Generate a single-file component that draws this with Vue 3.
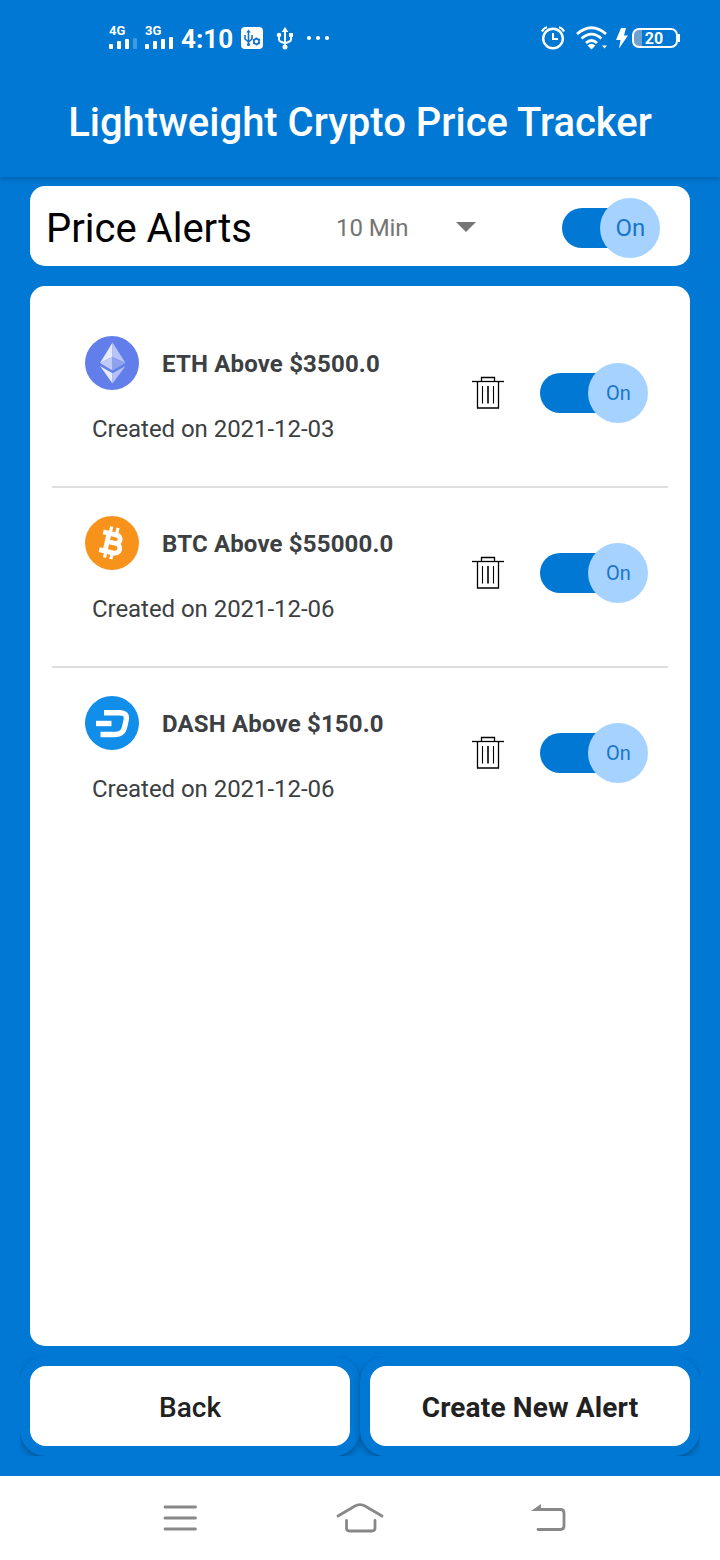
<template>
  <div class="screen">
    <header class="top">
      <div class="status-bar">
        <div class="signal">
          <span>4G</span>
          <svg width="28" height="12" viewBox="0 0 28 12">
            <g fill="#fff">
              <rect x="0" y="6" width="4" height="5" rx="1" />
              <rect x="8" y="3" width="4" height="8" rx="1" />
              <rect x="16" y="1" width="4" height="10" rx="1" />
            </g>
            <rect x="24" y="0" width="4" height="11" rx="1" fill="#3f9ae4" />
          </svg>
        </div>
        <div class="signal">
          <span>3G</span>
          <svg width="28" height="12" viewBox="0 0 28 12" fill="#fff">
            <rect x="0" y="6" width="4" height="5" rx="1" />
            <rect x="8" y="3" width="4" height="8" rx="1" />
            <rect x="16" y="1" width="4" height="10" rx="1" />
            <rect x="24" y="-1" width="4" height="12" rx="1" />
          </svg>
        </div>
        <span class="clock">4:10</span>
        <svg class="usb-debug" width="22" height="22" viewBox="0 0 22 22">
          <rect width="22" height="22" rx="4" fill="#fff" />
          <g fill="none" stroke="#1673c4" stroke-width="1.6">
            <path d="M7.500 4v14M4 8v4l3.500 3 3.500-3V8" />
            <circle cx="15.500" cy="14.500" r="2.600" />
            <path d="M15.500 10.500v1.500M15.500 17v1.500M12 12.500l1.300.8M17.700 15.700l1.300.8M12 16.500l1.300-.8M17.700 13.300l1.300-.8" />
          </g>
          <path d="M5.300 5.500 7.500 2.500l2.200 3z" fill="#1673c4" />
          <circle cx="7.500" cy="17.500" r="1.600" fill="#1673c4" />
        </svg>
        <svg class="usb" width="18" height="23" viewBox="0 0 18 23">
          <path d="M9 3v16M3 8v4.500q0 1.500 1.500 2L9 16.500l4.500-2q1.500-.5 1.500-2V8" fill="none" stroke="#fff" stroke-width="2" />
          <path d="M5.700 5 9 0l3.300 5z" fill="#fff" />
          <circle cx="3" cy="8" r="2.300" fill="#fff" />
          <rect x="13" y="6" width="4" height="4" fill="#fff" />
          <circle cx="9" cy="20" r="2.500" fill="#fff" />
        </svg>
        <svg class="dots" width="24" height="6" viewBox="0 0 24 6" fill="#fff">
          <circle cx="3" cy="3" r="2.100" />
          <circle cx="12" cy="3" r="2.100" />
          <circle cx="21" cy="3" r="2.100" />
        </svg>

        <div class="status-right">
          <svg width="24" height="24" viewBox="0 0 24 24" fill="none" stroke="#fff">
            <circle cx="12" cy="12.500" r="9.800" stroke-width="2.400" />
            <path d="M12 7v6h5" stroke-width="2" />
            <path d="M1 5.500Q2.500 2 6 1.200M23 5.500Q21.500 2 18 1.200" stroke-width="2.200" />
          </svg>
          <svg class="wifi" width="32" height="24" viewBox="0 0 32 24">
            <g fill="none" stroke="#fff" stroke-width="2.800">
              <path d="M1 8Q15.500-4.500 30 8" />
              <path d="M5.500 12.500Q15.500 3.800 25.500 12.500" />
              <path d="M10 17Q15.500 12 21 17" />
            </g>
            <path d="M11.500 19.500Q15.500 16 19.500 19.500L15.500 23.500z" fill="#fff" />
            <path d="M26 19.500h5l-2.500 3z" fill="#fff" />
          </svg>
          <svg class="bolt" width="12" height="21" viewBox="0 0 12 21">
            <path d="M5 0h5L8 7.500h4L3 20.500l1.500-8.500H0z" fill="#fff" />
          </svg>
          <div class="battery">
            <span>20</span>
          </div>
        </div>
      </div>
      <h1>Lightweight Crypto Price Tracker</h1>
    </header>

    <main>
      <section class="card settings">
        <h2>Price Alerts</h2>
        <div class="interval">
          <span>10 Min</span>
          <svg width="20" height="10" viewBox="0 0 20 10">
            <path d="M0 0h20L10 10z" fill="#757575" />
          </svg>
        </div>
        <button class="switch large" :class="{ off: !enabled }" @click="enabled = !enabled">
          <span>{{ enabled ? 'On' : 'Off' }}</span>
        </button>
      </section>

      <section class="card list">
        <div v-for="alert in alerts" :key="alert.coin" class="alert">
          <div class="info">
            <div class="coin">
              <svg v-if="alert.coin === 'ETH'" width="54" height="54" viewBox="0 0 54 54">
                <circle cx="27" cy="27" r="27" fill="#627eea" />
                <path d="M27.500 6.500V21L15 27z" fill="#e6eafc" />
                <path d="M27.500 6.500V21L40.500 27z" fill="#b9c5f6" />
                <path d="M27.500 21 15 27l12.500 7.500z" fill="#c0cbf7" />
                <path d="M27.500 21 40.500 27l-13 7.500z" fill="#8fa2ef" />
                <path d="M15 30l12.500 7.300V47.500z" fill="#e6eafc" />
                <path d="M40.500 30l-13 7.300V47.500z" fill="#b5c1f5" />
              </svg>
              <svg v-else-if="alert.coin === 'BTC'" width="54" height="54" viewBox="0 0 54 54">
                <circle cx="27" cy="27" r="27" fill="#f7931a" />
                <g transform="rotate(13 27 27)" fill="none" stroke="#fff">
                  <path d="M16 18.200h14a4.200 4.200 0 0 1 0 8.400H22M30 26.600h1a4.900 4.900 0 0 1 0 9.800H16M22 18v18" stroke-width="4.800" />
                  <path d="M23 11v6M29.500 11v6M23 37v6M29.500 37v6" stroke-width="3.200" />
                </g>
              </svg>
              <svg v-else width="54" height="54" viewBox="0 0 54 54">
                <circle cx="27" cy="27" r="27" fill="#118dea" />
                <g fill="none" stroke="#fff" stroke-width="5.400">
                  <path d="M19 16.700h15.500q8 0 6.700 7l-1.500 7q-1.700 7.800-9.700 7.800H15.500" />
                  <path d="M11 27.500h15.500" />
                </g>
              </svg>
              <strong>{{ alert.coin }} Above ${{ alert.price }}</strong>
            </div>
            <p>Created on {{ alert.created }}</p>
          </div>
          <button class="trash" aria-label="Delete" @click="removeAlert(alert)">
            <svg width="32" height="34" viewBox="0 0 32 34" fill="none" stroke="#000">
              <path d="M9.500 5.500v-4h13v4M5.500 5.500v26.500h21V5.500" stroke-width="1.300" />
              <path d="M0 5.500h32" stroke-width="1.300" />
              <path d="M10.500 10v17.500M21.500 10v17.500" stroke-width="1.100" />
              <path d="M16 10v17.500" stroke="#333" stroke-width="2" />
            </svg>
          </button>
          <button class="switch" :class="{ off: !alert.on }" @click="alert.on = !alert.on">
            <span>{{ alert.on ? 'On' : 'Off' }}</span>
          </button>
        </div>
      </section>
    </main>

    <div class="actions">
      <button class="back">Back</button>
      <button class="create">Create New Alert</button>
    </div>

    <nav>
      <svg width="34" height="28" viewBox="0 0 34 28" fill="none" stroke="#888" stroke-width="2.800" stroke-linecap="round">
        <path d="M2 3h30.500M2 14h30.500M2 25h30.500" />
      </svg>
      <svg class="home" width="48" height="30" viewBox="0 0 48 30" fill="none" stroke="#888" stroke-width="2.800" stroke-linecap="round">
        <path d="M2 13 19 3Q24 .2 29 3L46 13" />
        <path d="M10.500 17.500V25q0 3 3 3h22.500q3 0 3-3v-7.500" />
      </svg>
      <svg class="return" width="35" height="28" viewBox="0 0 35 28">
        <path d="M6 5.500h23.500q3.500 0 3.500 3.500v13q0 3.500-3.500 3.500H7" fill="none" stroke="#888" stroke-width="2.800" stroke-linecap="round" />
        <path d="M0 6.900 10 0v6.900z" fill="#888" />
      </svg>
    </nav>
  </div>
</template>

<script setup>
import { ref } from "vue"

const enabled = ref(true)

const alerts = ref([
  { coin: "ETH", price: "3500.0", created: "2021-12-03", on: true },
  { coin: "BTC", price: "55000.0", created: "2021-12-06", on: true },
  { coin: "DASH", price: "150.0", created: "2021-12-06", on: true }
])

const removeAlert = (alert) => {
  alerts.value = alerts.value.filter((a) => a !== alert)
}
</script>

<style>
body {
  margin: 0;
}
</style>

<style scoped>
.screen {
  width: 720px;
  height: 1560px;
  display: flex;
  flex-direction: column;
  background: #0078d4;
  font-family: Roboto, "Liberation Sans", sans-serif;
  overflow: hidden;
}

* {
  box-sizing: border-box;
}

svg {
  display: block;
  flex: none;
  overflow: visible;
}

button {
  font-family: inherit;
  border: none;
  padding: 0;
  cursor: pointer;
}

/* Header */

.top {
  height: 177px;
  flex: none;
  color: white;
  box-shadow: 0 2px 5px rgba(0, 0, 0, 0.2);
}

.status-bar {
  height: 76px;
  padding: 0 40px 0 109px;
  display: flex;
  align-items: center;
}

.signal {
  width: 36px;
  height: 26px;
}

.signal span {
  display: block;
  height: 13px;
  font-size: 13px;
  line-height: 12px;
  font-weight: 700;
}

.clock {
  font-size: 26px;
  font-weight: 700;
  line-height: 30px;
  width: 60px;
  padding-top: 2px;
}

.usb {
  margin-left: 13px;
}

.dots {
  margin-left: 12px;
}

.status-right {
  margin-left: auto;
  display: flex;
  align-items: center;
}

.wifi {
  margin-left: 11px;
}

.bolt {
  margin-left: 8px;
}

.battery {
  position: relative;
  width: 46px;
  height: 20px;
  margin: 0 2px 0 4px;
  padding-right: 2px;
  border: 2px solid white;
  border-radius: 7px;
  background: linear-gradient(90deg, #6fa0cf 8px, transparent 8px);
  font-size: 16px;
  font-weight: 700;
  line-height: 17px;
  text-align: center;
}

.battery::after {
  content: "";
  position: absolute;
  right: -4px;
  top: 4px;
  width: 2px;
  height: 8px;
  background: white;
}

h1 {
  margin: 0;
  height: 94px;
  line-height: 94px;
  font-size: 40px;
  font-weight: 500;
  text-align: center;
  white-space: nowrap;
}

/* Cards */

main {
  padding: 9px 30px 0;
  display: flex;
  flex-direction: column;
  gap: 20px;
}

.card {
  background: white;
  border-radius: 15px;
}

.settings {
  height: 80px;
  display: flex;
  align-items: center;
  padding: 4px 30px 0 16px;
}

h2 {
  margin: 0;
  width: 290px;
  font-size: 40px;
  font-weight: 400;
  color: black;
}

.interval {
  display: flex;
  align-items: center;
  justify-content: space-between;
  width: 140px;
  color: #757575;
  font-size: 24px;
  letter-spacing: -0.1px;
}

.interval svg {
  margin-bottom: 2px;
}

.list {
  height: 1060px;
  padding: 22px 22px 0;
}

.alert {
  height: 180px;
  padding: 0 20px 8px 33px;
  display: flex;
  align-items: center;
  border-bottom: 2px solid #dedede;
}

.alert:last-child {
  border-bottom-color: transparent;
}

.info {
  width: 387px;
  padding-bottom: 6px;
}

.coin {
  display: flex;
  align-items: center;
  gap: 23px;
  height: 54px;
  color: #3c4043;
}

.coin strong {
  font-size: 24px;
  font-weight: 700;
  letter-spacing: 0.17px;
  padding-top: 2px;
  white-space: nowrap;
}

.info p {
  margin: 24px 0 0 7px;
  font-size: 24px;
  line-height: 30px;
  letter-spacing: -0.05px;
  color: #3c4043;
}

.trash {
  background: none;
}

/* Switch */

.switch {
  margin-left: auto;
  width: 108px;
  height: 60px;
  display: flex;
  justify-content: flex-end;
  background: none;
  position: relative;
}

.switch::before {
  content: "";
  position: absolute;
  left: 0;
  right: 20px;
  top: 10px;
  height: 40px;
  border-radius: 20px;
  background: #0078d4;
}

.switch span {
  position: relative;
  width: 60px;
  height: 60px;
  padding-left: 1px;
  border-radius: 50%;
  background: #a6d2ff;
  color: #1976c9;
  font-size: 20px;
  line-height: 60px;
  text-align: center;
}

.switch.large {
  width: 98.5px;
}

.switch.large span {
  font-size: 24px;
}

.switch.off {
  justify-content: flex-start;
}

/* Bottom buttons, each one has a blue frame that casts the shadow */

.actions {
  height: 100px;
  margin: 10px 20px 0;
  display: flex;
  overflow: hidden;
}

.actions button {
  flex: 1;
  border: 10px solid #0078d4;
  border-radius: 26px;
  background: white;
  box-shadow: 0 3px 6px rgba(0, 0, 0, 0.3);
  color: #212121;
  font-size: 28px;
  padding-top: 3px;
}

.back {
  font-weight: 500;
}

.actions .create {
  font-weight: 700;
  letter-spacing: 0.15px;
}

/* System navigation */

nav {
  margin-top: 20px;
  height: 84px;
  padding-left: 163px;
  background: white;
  display: flex;
  align-items: center;
}

.home {
  margin-left: 139px;
}

.return {
  margin-left: 147px;
}
</style>
